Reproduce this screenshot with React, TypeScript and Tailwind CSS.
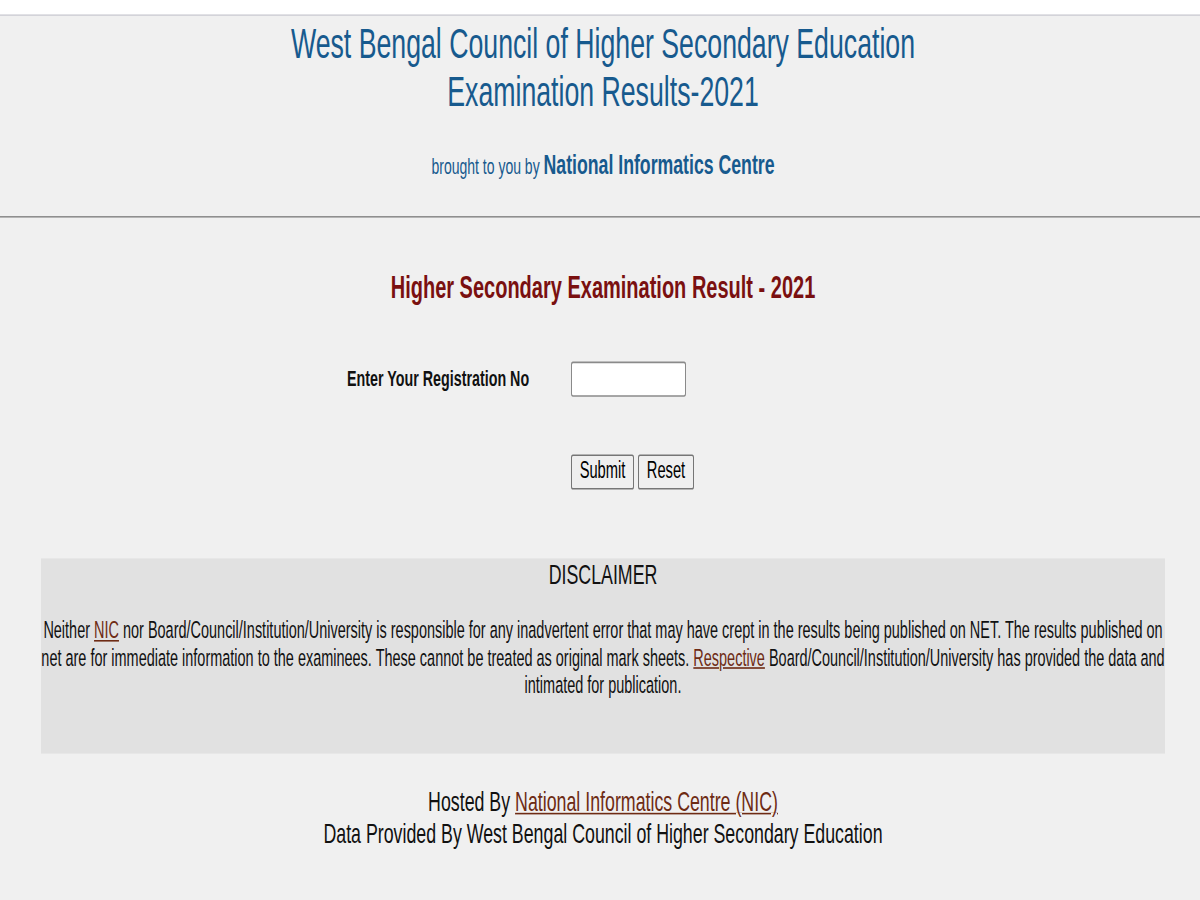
import React, { useState } from 'react';

// The reference is a page captured at 1200x562 and stretched to 900 tall,
// so the page is laid out at that height and stretched the same way.
const linkClass = 'text-[#6e2b14] underline underline-offset-[1px]';

export default function App() {
  const [regNo, setRegNo] = useState('');

  return (
    <div className="h-[900px] overflow-hidden bg-[#f0f0f0] font-['Liberation_Sans',Arial,sans-serif] text-[#111]">
      <div className="h-[562.5px] origin-top scale-y-[1.6]">
        <div className="h-[8.5px] bg-white" />
        <header className="border-t border-b border-t-[#d3d3d9] border-b-[#8f8f8f] pt-[2.75px] pb-[20.1px] pl-[6px] text-center">
          <h1 className="text-[26.7px] leading-[30px] text-[#175a8e]">
            West Bengal Council of Higher Secondary Education
            <br />
            Examination Results-2021
          </h1>
          <p className="mt-[21px] text-[14px] leading-[20.7px] text-[#175a8e]">
            brought to you by <span className="text-[17.7px] font-bold">National Informatics Centre</span>
          </p>
        </header>

        <div className="pl-[6px]">
          <main>
            <h2 className="mt-[32.4px] text-center text-[20px] font-bold leading-[23px] text-[#7a1010]">
              Higher Secondary Examination Result - 2021
            </h2>

            <form
              className="mx-auto mt-[33.5px] grid w-[512px] grid-cols-[224px_288px]"
              onSubmit={(e) => e.preventDefault()}
            >
              <label htmlFor="regno" className="flex items-center text-[14.3px] font-bold">
                Enter Your Registration No
              </label>
              <div>
                <input
                  id="regno"
                  type="text"
                  value={regNo}
                  onChange={(e) => setRegNo(e.target.value)}
                  className="h-[22px] w-[115px] rounded-[2px] border border-[#8a8a8a] bg-white px-1 text-[14px] outline-none"
                />
              </div>
              <div />
              <div className="mt-[34.75px] flex gap-[4px]">
                <button
                  type="submit"
                  className="h-[22px] w-[63px] rounded-[2px] border border-[#767676] bg-[#efefef] text-[14.7px] leading-none text-black"
                >
                  Submit
                </button>
                <button
                  type="reset"
                  onClick={() => setRegNo('')}
                  className="h-[22px] w-[56px] rounded-[2px] border border-[#767676] bg-[#efefef] text-[14.7px] leading-none text-black"
                >
                  Reset
                </button>
              </div>
            </form>

            <section className="mx-auto mt-[43.8px] h-[122px] w-[1124px] bg-[#e1e1e1] text-center">
              <h3 className="text-[17.8px] leading-[20.7px]">DISCLAIMER</h3>
              <p className="mt-[16px] text-[14.47px] leading-[16.9px]">
                Neither <a href="#" className={linkClass}>NIC</a> nor Board/Council/Institution/University is
                responsible for any inadvertent error that may have crept in the results being published on NET.
                The results published on net are for immediate information to the examinees. These cannot be
                treated as original mark sheets. <a href="#" className={linkClass}>Respective</a>{' '}
                Board/Council/Institution/University has provided the data and intimated for publication.
              </p>
            </section>
          </main>

          <footer className="mt-[19.9px] text-center text-[17.8px] leading-[20px]">
            <p>
              Hosted By <a href="#" className={linkClass}>National Informatics Centre (NIC)</a>
            </p>
            <p>Data Provided By West Bengal Council of Higher Secondary Education</p>
          </footer>
        </div>
      </div>
    </div>
  );
}
